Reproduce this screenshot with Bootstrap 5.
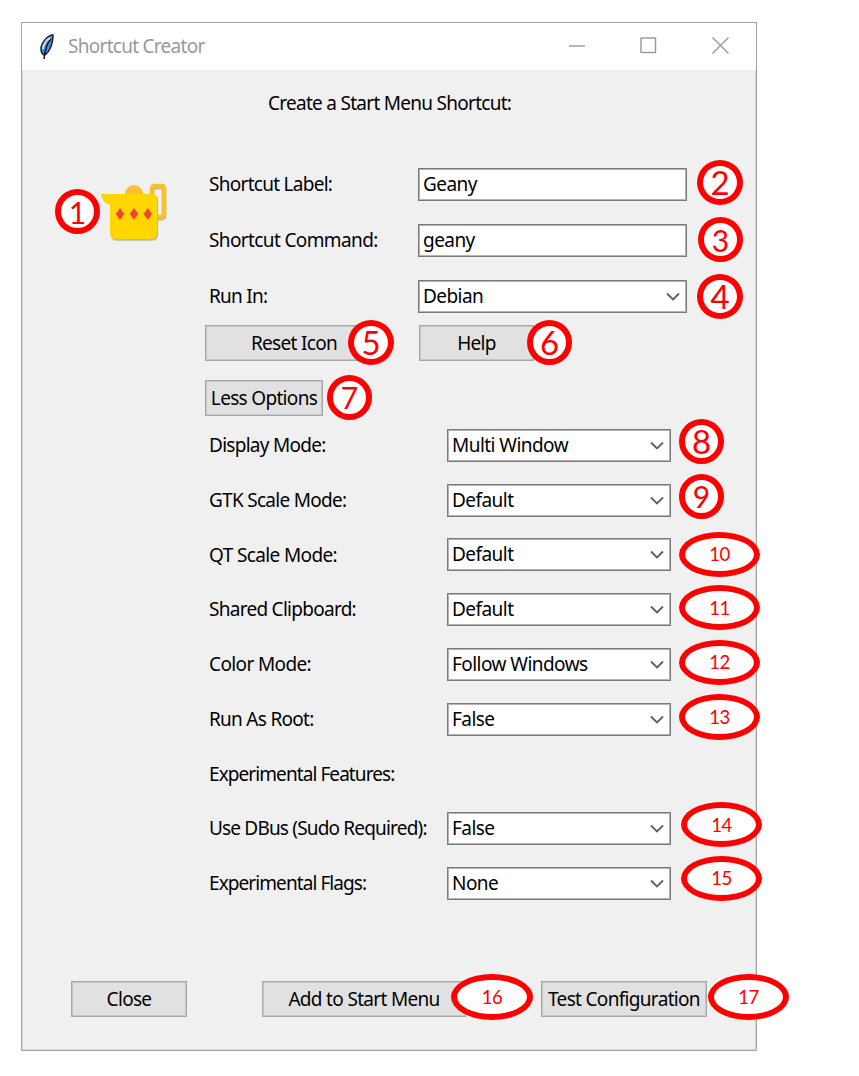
<!DOCTYPE html>
<html lang="en">
<head>
<meta charset="utf-8">
<title>Shortcut Creator</title>
<link href="https://cdn.jsdelivr.net/npm/bootstrap@5.3.0/dist/css/bootstrap.min.css" rel="stylesheet">
<style>
body{font-family:"Noto Sans","Open Sans",sans-serif;font-size:19px;letter-spacing:-.72px;color:#000;background:#fff;line-height:1.3;overflow:hidden}
.win{width:736px;height:1029px;margin:22px 0 0 21px;border:1px solid #a3a3a3;box-shadow:inset 0 0 0 1px #d8d8d8;background:#f0f0f0}
.bar{height:47px;color:#999;padding-left:17px}
.cap{width:71.5px}
.cap svg{display:block;margin:-2px auto 0}
.heading{height:66px;padding-left:246px}
.content{height:820px}
.icon-col{width:0}
.pot{margin:46px 0 0 79px;overflow:visible}
.form-part{margin-left:187px;padding-top:20px}
.line{height:56.3px}
.line>.txt{width:209px}
.opt{height:54.75px}
.opt>.txt{width:238px}
.txt{white-space:nowrap}
.loose{letter-spacing:-.62px}
.tight{letter-spacing:-.92px}
.form-control,.form-select{font-size:inherit;letter-spacing:-.55px;color:#000;height:33px;min-height:0;border:1px solid #7a7a7a;box-shadow:inset 0 0 0 1px #b4b4b4;border-radius:0;padding:0 4px;line-height:31px;background-color:#fff}
.line .form-control,.line .form-select{width:269px}
.opt .form-select{width:224px}
.form-select{background-image:url("data:image/svg+xml,%3Csvg xmlns='http://www.w3.org/2000/svg' viewBox='0 0 14 9'%3E%3Cpath d='M1 1.5l6 6 6-6' fill='none' stroke='%23606060' stroke-width='1.9'/%3E%3C/svg%3E");background-size:14px 9px;background-position:right 6px center}
.win .btn{font-size:inherit;letter-spacing:-.68px;color:#000;height:36px;border:1px solid #a8a8a8;box-shadow:inset 0 0 0 1px #c4c4c4;border-radius:0;background:#e1e1e1;padding:0;line-height:34px;white-space:nowrap}
.pin{position:absolute;width:45px;height:45px;border:6px solid red;border-radius:50%;background:#fff;color:red;font-family:Lato,sans-serif;font-size:33px;letter-spacing:0;line-height:1;display:flex;align-items:center;justify-content:center;z-index:2}
.pin.sm{font-size:30px}
.pin.wide{width:81px;font-size:18.5px;letter-spacing:-.4px}
.line .pin{left:488px}
.opt .pin{left:470px}
</style>
</head>
<body>
<main class="win position-relative">
  <header class="bar bg-white d-flex align-items-center mx-0">
    <svg width="16" height="26" viewBox="0 0 16 26"><path d="M14 1C9 1 2 9 2 15c0 3 1 5 3 6 4-1 9-9 9-20z" fill="#4a8fe0" stroke="#222" stroke-width="1.5"/><path d="M12 5C8 9 6 15 5 25" fill="none" stroke="#111" stroke-width="1.5"/><path d="M11 4C7 6 4 11 4 15" fill="none" stroke="#c4dcf6" stroke-width="2"/></svg>
    <span class="txt ps-1" style="margin-left:9px">Shortcut Creator</span>
    <div class="d-flex ms-auto">
      <div class="cap"><svg width="17" height="17"><path d="M0 9h16" stroke="#999" stroke-width="1.4"/></svg></div>
      <div class="cap"><svg width="17" height="17"><rect x="1" y="1" width="14.5" height="14.5" fill="none" stroke="#999" stroke-width="1.4"/></svg></div>
      <div class="cap"><svg width="17" height="17"><path d="M.5 .5l16 16M16.5 .5l-16 16" stroke="#999" stroke-width="1.4"/></svg></div>
    </div>
  </header>
  <div class="heading d-flex align-items-center"><span class="txt">Create a Start Menu Shortcut:</span></div>

  <div class="content d-flex">
    <div class="icon-col position-relative flex-shrink-0">
      <svg class="pot" width="68" height="60" viewBox="0 0 68 60">
        <g fill="none"><path d="M57 35h3q3 0 3-3V7q0-3-3-3h-6q-3 0-3 3v8" stroke="#c5b68e" stroke-width="4.500" transform="translate(0 1.2)"/><path d="M57 35h3q3 0 3-3V7q0-3-3-3h-6q-3 0-3 3v8" stroke="#fbc02d" stroke-width="4.500"/></g>
        <path d="M23.500 13q2-10 9.500-10t9.500 10z" fill="#fbc02d"/>
        <path d="M1 13q1 8 9 9v30q0 6 6 6h35q6 0 6-6V18q0-5-4-5z" fill="#b9b9ab" transform="translate(0 .8)"/>
        <path d="M0 12q1 9 9 10v29q0 6 6 6h35q6 0 6-6V17q0-5-4-5z" fill="#ffd600"/>
        <path d="M19 26l4.200 6-4.200 6-4.200-6zM33 26l4.200 6-4.200 6-4.200-6zM46.800 26l4.200 6-4.200 6-4.200-6z" fill="#f44336"/>
      </svg>
      <span class="pin sm" style="left:33px;top:53px">1</span>
    </div>
    <div class="form-part">
      <div class="line position-relative d-flex align-items-center"><label class="txt">Shortcut Label:</label><input class="form-control" value="Geany"><span class="pin" style="top:4px;width:46px">2</span></div>
      <div class="line position-relative d-flex align-items-center"><label class="txt loose">Shortcut Command:</label><input class="form-control" value="geany"><span class="pin sm" style="top:5px;left:489px">3</span></div>
      <div class="line position-relative d-flex align-items-center"><label class="txt">Run In:</label><select class="form-select"><option>Debian</option></select><span class="pin" style="top:5px;width:46px">4</span></div>
      <div class="position-relative d-flex" style="margin-left:-4px">
        <button class="btn" style="width:178px">Reset Icon</button>
        <button class="btn" style="width:115px;margin-left:36px">Help</button>
        <span class="pin" style="left:143px;top:-5px;width:46px">5</span><span class="pin" style="left:322px;top:-5px">6</span>
      </div>
      <div class="position-relative d-flex" style="margin:19px 0 2.200px -4px">
        <button class="btn" style="width:118px">Less Options</button><span class="pin sm" style="left:122px;top:-5px">7</span>
      </div>
      <div class="opt position-relative d-flex align-items-center"><label class="txt">Display Mode:</label><select class="form-select"><option>Multi Window</option></select><span class="pin" style="top:1px">8</span></div>
      <div class="opt position-relative d-flex align-items-center"><label class="txt">GTK Scale Mode:</label><select class="form-select"><option>Default</option></select><span class="pin sm" style="top:1px">9</span></div>
      <div class="opt position-relative d-flex align-items-center"><label class="txt loose">QT Scale Mode:</label><select class="form-select"><option>Default</option></select><span class="pin wide" style="top:4px">10</span></div>
      <div class="opt position-relative d-flex align-items-center"><label class="txt">Shared Clipboard:</label><select class="form-select"><option>Default</option></select><span class="pin wide" style="top:3px">11</span></div>
      <div class="opt position-relative d-flex align-items-center"><label class="txt loose">Color Mode:</label><select class="form-select"><option>Follow Windows</option></select><span class="pin wide" style="top:3px">12</span></div>
      <div class="opt position-relative d-flex align-items-center"><label class="txt">Run As Root:</label><select class="form-select"><option>False</option></select><span class="pin wide" style="top:2px;height:46px">13</span></div>
      <div class="opt d-flex align-items-center"><span class="txt tight">Experimental Features:</span></div>
      <div class="opt position-relative d-flex align-items-center"><label class="txt" style="letter-spacing:-.82px">Use DBus (Sudo Required):</label><select class="form-select"><option>False</option></select><span class="pin wide" style="top:1px;left:472px">14</span></div>
      <div class="opt position-relative d-flex align-items-center"><label class="txt tight">Experimental Flags:</label><select class="form-select"><option>None</option></select><span class="pin wide" style="top:0;left:472px">15</span></div>
    </div>
  </div>

  <footer class="position-relative d-flex" style="margin:25px 0 0 49px">
    <button class="btn" style="width:116px">Close</button>
    <button class="btn" style="width:204px;margin-left:75px">Add to Start Menu</button>
    <button class="btn" style="width:166px;margin-left:75px">Test Configuration</button>
    <span class="pin wide" style="left:380px;top:-7px;width:82px;height:46px">16</span>
    <span class="pin wide" style="left:637px;top:-7px;height:46px">17</span>
  </footer>
</main>
<script src="https://cdn.jsdelivr.net/npm/bootstrap@5.3.0/dist/js/bootstrap.bundle.min.js"></script>
</body>
</html>
